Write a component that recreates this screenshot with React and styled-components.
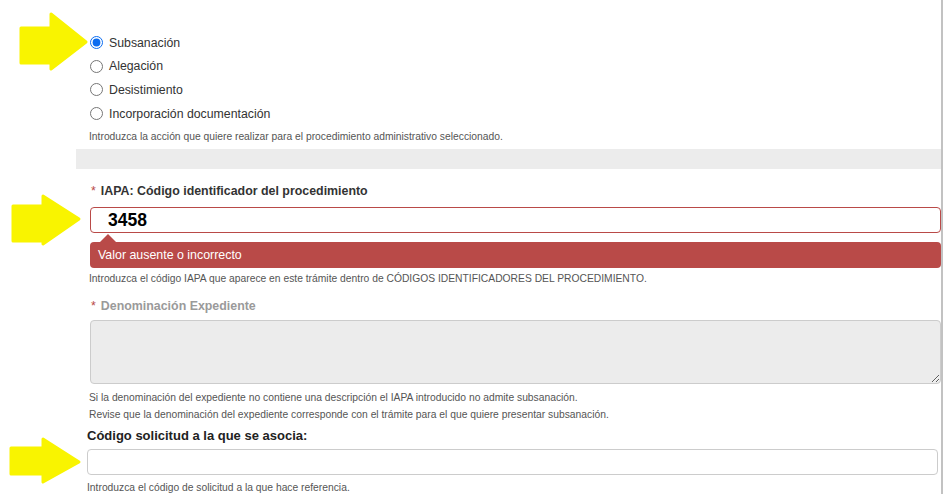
import React from 'react';
import styled, { createGlobalStyle } from 'styled-components';

const GlobalStyle = createGlobalStyle`
  html, body { margin: 0; padding: 0; background: #fff; }
  body { font-family: "Liberation Sans", Arial, sans-serif; color: #333; }
`;

const Page = styled.div`
  position: relative;
  width: 941px;
  height: 494px;
  overflow: hidden;
  background: #fff;
  border-right: 2px solid #c2c2c2;
`;

const Form = styled.form`
  margin-left: 76px;
  width: 865px;
  display: flex;
  flex-direction: column;
`;

const Section = styled.div`
  display: flex;
  flex-direction: column;
  padding: ${p => p.$pad || '0 0 0 14px'};
`;

const RadioList = styled.div`
  display: flex;
  flex-direction: column;
  padding-top: 31px;
`;

const RadioRow = styled.label`
  display: flex;
  align-items: center;
  height: 23.6px;
  font-size: 12.3px;
  color: #333;
  gap: 6px;
`;

const Radio = styled.input.attrs({ type: 'radio' })`
  width: 13px;
  height: 13px;
  margin: 0;
  accent-color: #0b6cf0;
`;

const Help = styled.p`
  margin: ${p => p.$m || '0'};
  font-size: 10.3px;
  line-height: ${p => p.$lh || '14px'};
  color: #555;
`;

const Band = styled.div`
  height: 20px;
  margin-top: 5px;
  background: #ececec;
`;

const Label = styled.div`
  font-size: ${p => p.$size || '12.4px'};
  font-weight: bold;
  line-height: 16px;
  color: ${p => p.$muted ? '#9a9a9a' : p.$dark ? '#222' : '#333'};
  margin: ${p => p.$m || '0'};
`;

const Req = styled.span`
  color: #b94a48;
  margin-right: 5px;
  font-weight: normal;
`;

const TextField = styled.input`
  box-sizing: border-box;
  width: 100%;
  height: 26px;
  margin: 0;
  padding: 0 17px;
  border: 1px solid ${p => p.$error ? '#b94a48' : '#ccc'};
  border-radius: 4px;
  font-family: "Liberation Sans", Arial, sans-serif;
  font-size: 17.5px;
  font-weight: bold;
  color: #000;
  background: #fff;
  outline: none;
`;

const ErrorTip = styled.div`
  position: relative;
  margin-top: 9px;
  height: 26px;
  display: flex;
  align-items: center;
  padding-left: 8px;
  border-radius: 4px;
  background: #b94a48;
  color: #fff;
  font-size: 12.4px;

  &::before {
    content: '';
    position: absolute;
    left: 10px;
    top: -8px;
    border-left: 8px solid transparent;
    border-right: 8px solid transparent;
    border-bottom: 8px solid #b94a48;
  }
`;

const Area = styled.textarea`
  box-sizing: border-box;
  width: 100%;
  height: 64px;
  margin: 0;
  border: 1px solid #ccc;
  border-radius: 4px;
  background: #ececec;
  resize: vertical;
  display: block;
`;

const Arrows = styled.svg`
  position: absolute;
  left: 0;
  top: 0;
  pointer-events: none;
`;

const Yellow = styled.polygon`
  fill: #f9f400;
  stroke: #f9f400;
  stroke-width: 3;
  stroke-linejoin: round;
`;

const options = ['Subsanación', 'Alegación', 'Desistimiento', 'Incorporación documentación'];

export default function App() {
  return (
    <>
      <GlobalStyle />
      <Page>
        <Form onSubmit={e => e.preventDefault()}>
          <Section>
            <RadioList>
              {options.map((o, i) => (
                <RadioRow key={o}>
                  <Radio name="accion" defaultChecked={i === 0} />
                  {o}
                </RadioRow>
              ))}
            </RadioList>
            <Help $m="5px 0 0 -1px">
              Introduzca la acción que quiere realizar para el procedimiento administrativo seleccionado.
            </Help>
          </Section>

          <Band />

          <Section>
            <Label $m="14px 0 8px 1px"><Req>*</Req>IAPA: Código identificador del procedimiento</Label>
            <TextField $error defaultValue="3458" />
            <ErrorTip>Valor ausente o incorrecto</ErrorTip>
            <Help $m="4px 0 0 -1px">
              Introduzca el código IAPA que aparece en este trámite dentro de CÓDIGOS IDENTIFICADORES DEL PROCEDIMIENTO.
            </Help>
          </Section>

          <Section>
            <Label $muted $m="12px 0 6px 1px"><Req>*</Req>Denominación Expediente</Label>
            <Area disabled />
            <Help $m="5px 0 0 -1px" $lh="17px">
              Si la denominación del expediente no contiene una descripción el IAPA introducido no admite subsanación.
            </Help>
            <Help $m="0 0 0 -1px" $lh="17px">
              Revise que la denominación del expediente corresponde con el trámite para el que quiere presentar subsanación.
            </Help>
          </Section>

          <Section $pad="0 3px 0 11px">
            <Label $dark $size="13px" $m="5px 0 5px 0">Código solicitud a la que se asocia:</Label>
            <TextField />
            <Help $m="6px 0 0 0">Introduzca el código de solicitud a la que hace referencia.</Help>
          </Section>
        </Form>

        <Arrows width="90" height="494" viewBox="0 0 90 494">
          <Yellow points="21,28 51,28 51,14 86,42 51,69 51,63 21,63" />
          <Yellow points="13,206 43,206 43,196 79,219 43,244 43,241 13,241" />
          <Yellow points="11,448 43,448 43,439 79,462 43,482 43,474 11,474" />
        </Arrows>
      </Page>
    </>
  );
}
